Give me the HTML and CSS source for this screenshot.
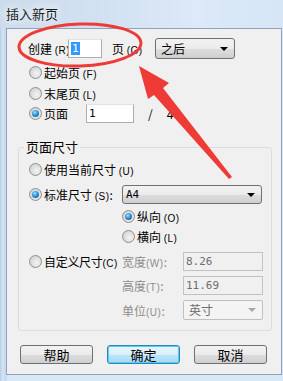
FILE: index.html
```html
<!DOCTYPE html>
<html lang="zh">
<head>
    <meta charset="UTF-8">
    <title>插入新页</title>
    <link rel="stylesheet" href="styles.css">
</head>
<body>
<div class="window">
    <div class="title-bar">
        <span class="title">插入新页</span>
    </div>
    <div class="client">
        <div class="row create-row">
            <span class="create-label">创建 <span class="key">(R)</span>:</span>
            <span class="input create-input"><span class="selected">1</span></span>
            <span class="page-label">页 <span class="key">(G)</span></span>
            <span class="select where-select">之后<span class="arrow"></span></span>
        </div>

        <div class="row radio-row first">
            <span class="radio"></span><span>起始页 <span class="key">(F)</span></span>
        </div>
        <div class="row radio-row">
            <span class="radio"></span><span>末尾页 <span class="key">(L)</span></span>
        </div>
        <div class="row radio-row page-row">
            <span class="radio checked"></span><span class="page-text">页面</span>
            <span class="input page-input">1</span>
            <span class="slash">/</span>
            <span class="total">4</span>
        </div>

        <div class="group">
            <span class="group-title">页面尺寸</span>
            <div class="row group-row current-row">
                <span class="radio"></span><span>使用当前尺寸 <span class="key">(U)</span></span>
            </div>
            <div class="row group-row std-row">
                <span class="radio checked"></span><span class="std-text">标准尺寸 <span class="key">(S)</span>:</span>
                <span class="select size-select">A4<span class="arrow"></span></span>
            </div>
            <div class="row group-row sub-row portrait-row">
                <span class="radio checked"></span><span>纵向 <span class="key">(O)</span></span>
            </div>
            <div class="row group-row sub-row">
                <span class="radio"></span><span>横向 <span class="key">(L)</span></span>
            </div>
            <div class="row group-row custom-row">
                <span class="radio"></span><span class="custom-text">自定义尺寸<span class="key">(C)</span></span>
                <span class="field-label">宽度<span class="key">(W)</span>:</span>
                <span class="input disabled">8.26</span>
            </div>
            <div class="row group-row field-row">
                <span class="field-label">高度<span class="key">(T)</span>:</span>
                <span class="input disabled">11.69</span>
            </div>
            <div class="row group-row field-row">
                <span class="field-label">单位<span class="key">(U)</span>:</span>
                <span class="select disabled">英寸<span class="arrow"></span></span>
            </div>
        </div>

        <div class="button-group">
            <button>帮助</button>
            <button class="default">确定</button>
            <button>取消</button>
        </div>
    </div>
</div>

<svg class="markup" width="283" height="381" viewBox="0 0 283 381">
    <ellipse cx="80" cy="45" rx="61" ry="21" fill="none" stroke="#ee3b36" stroke-width="3" transform="rotate(-2 80 45)"/>
    <polygon points="139,66 169,83 163,88 232,177 229,179 154,95 148,99" fill="#ee3b36"/>
</svg>
</body>
</html>
```

FILE: styles.css
```css
body {
    margin: 0;
    width: 283px;
    height: 381px;
    overflow: hidden;
    font-family: "Noto Sans CJK SC", "DejaVu Sans", sans-serif;
    font-size: 12px;
    color: #000;
    background: linear-gradient(90deg, #b9cde3 0, #d6e6f6 3px, #c4d7ec 5px, #d9e8f7 8px);
    position: relative;
}

.window {
    height: 381px;
    display: flex;
    flex-direction: column;
}

.title-bar {
    height: 28px;
    background: linear-gradient(90deg, #cddcec 0, #d3e2f2 40%, #dbe9f8 70%, #d6e6f6 100%);
    display: flex;
    align-items: center;
}

.title {
    margin-left: 6px;
    margin-top: -2px;
    font-size: 13px;
    color: #1a1a1a;
    text-shadow: 0 0 6px #f4f8fc, 0 0 10px #eef4fa;
}

.client {
    margin-left: 6px;
    width: 276px;
    height: 347px;
    box-sizing: border-box;
    background: #f0f0f0;
    border: 1px solid #8fa3bd;
    padding: 9px 0 0 21px;
    display: flex;
    flex-direction: column;
}

.row {
    display: flex;
    align-items: center;
    white-space: nowrap;
}

.key {
    font-family: "Liberation Sans", sans-serif;
    font-size: 10px;
    letter-spacing: 0.5px;
}

.create-row {
    height: 20px;
}

.create-label {
    width: 40px;
    flex: none;
}

.input {
    box-sizing: border-box;
    height: 19px;
    border: 1px solid #abadb3;
    border-top-color: #e3e3e3;
    background: #fff;
    padding: 1px 2px;
    font-family: "DejaVu Sans Mono", monospace;
    font-size: 11px;
    line-height: 15px;
    flex: none;
}

.create-input {
    width: 34px;
}

.selected {
    background: #3399ff;
    color: #fff;
    padding: 0 1px;
}

.page-label {
    margin-left: 10px;
    width: 31px;
    flex: none;
}

.select {
    position: relative;
    box-sizing: border-box;
    height: 21px;
    border: 1px solid #707070;
    border-radius: 3px;
    background: linear-gradient(#f2f2f2 0, #ebebeb 50%, #dddddd 51%, #cfcfcf 100%);
    padding-left: 5px;
    line-height: 19px;
    flex: none;
}

.arrow {
    position: absolute;
    right: 6px;
    top: 8px;
    border-left: 4px solid transparent;
    border-right: 4px solid transparent;
    border-top: 4px solid #000;
}

.where-select {
    width: 80px;
    margin-left: 12px;
}

.radio-row {
    height: 21px;
}

.radio-row.first {
    margin-top: 4px;
}

.radio {
    width: 11px;
    height: 11px;
    border-radius: 50%;
    border: 1px solid #8e8f8f;
    background: radial-gradient(circle at 60% 60%, #f4f4f4 0, #d6d6d6 70%);
    margin: 0 2px 0 1px;
    flex: none;
    position: relative;
}

.radio.checked::after {
    content: "";
    position: absolute;
    left: 2px;
    top: 2px;
    width: 7px;
    height: 7px;
    border-radius: 50%;
    background: radial-gradient(circle at 40% 35%, #9ee3ff 0, #2a8ad4 50%, #0a4f9a 100%);
}

.page-row {
    height: 19px;
}

.page-text {
    width: 42px;
    flex: none;
}

.page-input {
    width: 48px;
}

.slash {
    margin-left: 14px;
}

.total {
    margin-left: 14px;
}

.group {
    margin: 24px 0 0 -10px;
    width: 254px;
    height: 184px;
    box-sizing: border-box;
    border: 1px solid #d5dfe5;
    border-radius: 3px;
    padding: 0 0 0 9px;
    display: flex;
    flex-direction: column;
}

.group-title {
    align-self: flex-start;
    margin: -9px 0 0 -4px;
    padding: 0 2px;
    height: 16px;
    line-height: 16px;
    background: #f0f0f0;
    font-size: 13px;
}

.group-row {
    height: 20px;
}

.current-row {
    margin-top: 4px;
}

.std-row {
    margin-top: 5px;
}

.std-text {
    width: 78px;
    flex: none;
}

.size-select {
    width: 140px;
    height: 19px;
    line-height: 17px;
    padding-left: 3px;
    font-family: "DejaVu Sans Mono", monospace;
    font-size: 11px;
}

.size-select .arrow {
    top: 7px;
}

.sub-row {
    padding-left: 93px;
}

.portrait-row {
    margin-top: 2px;
}

.custom-row {
    margin-top: 5px;
}

.custom-text {
    width: 78px;
    flex: none;
    letter-spacing: -0.3px;
}

.field-label {
    color: #8d8d8d;
    width: 61px;
    flex: none;
}

.field-row {
    margin-top: 4px;
    padding-left: 94px;
}

.field-row + .field-row {
    margin-top: 5px;
}

.input.disabled {
    width: 80px;
    height: 19px;
    background: #f0f0f0;
    border-color: #c2c2c2;
    color: #6d6d6d;
}

.select.disabled {
    width: 80px;
    height: 20px;
    line-height: 18px;
    background: #f4f4f4;
    border-color: #c0c0c0;
    border-radius: 2px;
    color: #6d6d6d;
}

.select.disabled .arrow {
    border-top-color: #a8a8a8;
    top: 7px;
}

.button-group {
    display: flex;
    gap: 14px;
    margin: 14px 0 0 -8px;
}

button {
    width: 73px;
    height: 19px;
    padding: 0;
    border: 1px solid #707070;
    border-radius: 3px;
    background: linear-gradient(#f2f2f2 0, #ebebeb 50%, #dddddd 51%, #cfcfcf 100%);
    font-family: "Noto Sans CJK SC", sans-serif;
    font-size: 13px;
    line-height: 16px;
    color: #000;
}

button.default {
    border-color: #3c7fb1;
    background: linear-gradient(#eaf6fd 0, #d9f0fc 50%, #bee6fd 51%, #a7d9f5 100%);
    box-shadow: inset 0 0 0 1px #48d2ff;
}

.markup {
    position: absolute;
    left: 0;
    top: 0;
    pointer-events: none;
}
```
